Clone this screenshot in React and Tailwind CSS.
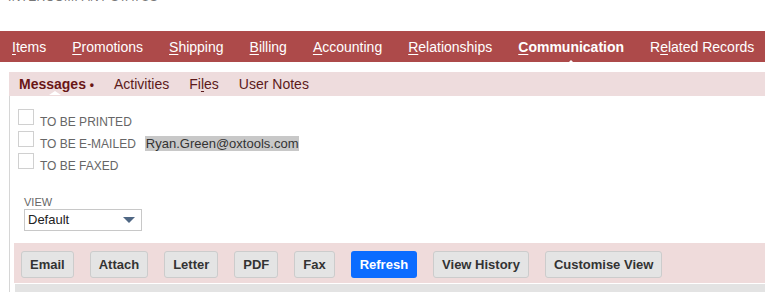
export default function App() {
  const font = { fontFamily: '"Liberation Sans", Arial, sans-serif' };
  const nav = [
    ["I", "tems"],
    ["P", "romotions"],
    ["S", "hipping"],
    ["B", "illing"],
    ["A", "ccounting"],
    ["R", "elationships"],
  ];
  const buttons = ["Email", "Attach", "Letter", "PDF", "Fax", "Refresh", "View History", "Customise View"];
  const checks = ["TO BE PRINTED", "TO BE E-MAILED", "TO BE FAXED"];
  return (
    <div className="w-[765px] h-[292px] overflow-hidden bg-white" style={font}>
      <div className="h-[31px] overflow-hidden">
        <div className="-mt-[10px] pl-[8px] text-[12px] leading-[14px] text-[#777] tracking-wide">INTERCOMPANY STATUS</div>
      </div>
      <div className="relative h-[31px] bg-[#ad4a4a] flex items-center pl-[12px] pt-[2px] gap-[26px] text-[14px] text-white">
        {nav.map(([a, b]) => (
          <span key={a + b} className="whitespace-nowrap">
            <span className="underline underline-offset-2">{a}</span>
            {b}
          </span>
        ))}
        <span className="font-bold whitespace-nowrap relative">
          <span className="underline underline-offset-2">C</span>ommunication
          <span className="absolute left-1/2 -translate-x-1/2 top-[23px] w-0 h-0 border-l-[6px] border-r-[6px] border-b-[6px] border-l-transparent border-r-transparent border-b-white"></span>
        </span>
        <span className="whitespace-nowrap">
          R<span className="underline underline-offset-2">e</span>lated Records
        </span>
      </div>
      <div className="h-[10px]"></div>
      <div className="ml-[9px]">
        <div className="relative h-[24px] bg-[#eedcdd] flex items-center pl-[10px] gap-[20px] text-[14px] text-[#5c1a1a]">
          <span className="font-bold text-[#6a1616] relative whitespace-nowrap">
            Messages <span className="text-[12px]">•</span>
            <span className="absolute left-[30px] top-[17px] w-0 h-0 border-l-[6px] border-r-[6px] border-b-[4px] border-l-transparent border-r-transparent border-b-white"></span>
          </span>
          <span>Activities</span>
          <span>
            Fi<span className="underline underline-offset-2">l</span>es
          </span>
          <span>User Notes</span>
        </div>
        <div className="border-l border-[#d6d6d6] h-[200px]">
          <div className="pt-[13px] pl-[8px] flex flex-col gap-[6px]">
            {checks.map((c, i) => (
              <div key={c} className="flex items-center h-[16px]">
                <div className="w-[16px] h-[16px] border border-[#d0d0d0] bg-white"></div>
                <span className="ml-[6px] mt-[9px] text-[12px] text-[#666]">{c}</span>
                {i === 1 && (
                  <span className="ml-[9px] mt-[9px] bg-[#c8c8c8] text-[13px] text-[#333] px-[1px] leading-[15px]">
                    Ryan.Green@oxtools.com
                  </span>
                )}
              </div>
            ))}
          </div>
          <div className="mt-[27px] ml-[14px] text-[11px] leading-[12px] text-[#666]">VIEW</div>
          <div className="ml-[14px] mt-[1px] w-[118px] h-[22px] border border-[#c8c8c8] bg-white flex items-center justify-between pl-[3px] pr-[6px]">
            <span className="text-[13px] text-[#222]">Default</span>
            <svg width="12" height="6" viewBox="0 0 12 6">
              <path d="M0 0 L12 0 L6 6 Z" fill="#4f6784" />
            </svg>
          </div>
          <div className="mt-[12px] ml-[4px] h-[40px] bg-[#efdbdb] flex items-start pt-[8px] pl-[7px] gap-[16px]">
            {buttons.map((b) => (
              <div
                key={b}
                className={
                  b === "Refresh"
                    ? "h-[27px] px-[9px] flex items-center rounded-[3px] bg-[#0b6cff] text-white text-[13px] font-bold whitespace-nowrap"
                    : "h-[27px] px-[8px] flex items-center rounded-[3px] bg-[#e4e4e4] border border-[#cccccc] text-[#333] text-[13px] font-bold whitespace-nowrap"
                }
              >
                {b}
              </div>
            ))}
          </div>
          <div className="mt-[1px] ml-[5px] h-[20px] bg-[#e3e3e3]"></div>
        </div>
      </div>
    </div>
  );
}
